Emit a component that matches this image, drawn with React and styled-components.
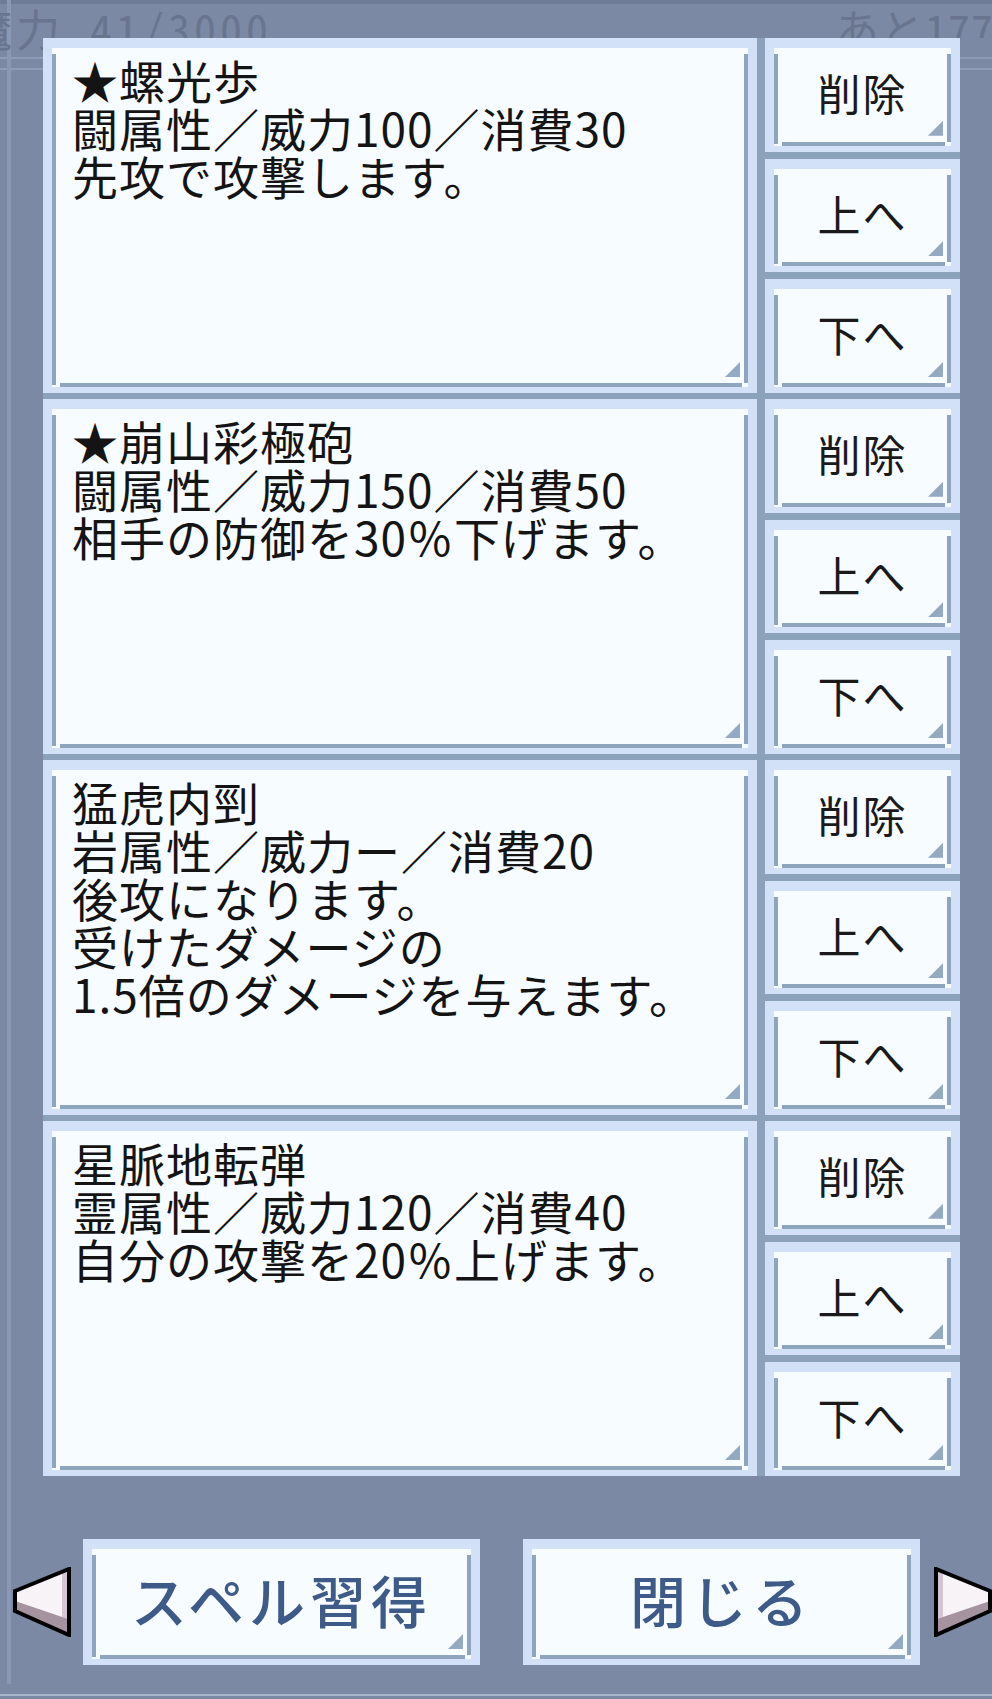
import React from 'react'
import styled, { createGlobalStyle, css } from 'styled-components'

const spells = [
  { id: 1, lines: ['★螺光歩', '闘属性／威力100／消費30', '先攻で攻撃します。'] },
  { id: 2, lines: ['★崩山彩極砲', '闘属性／威力150／消費50', '相手の防御を30％下げます。'] },
  {
    id: 3,
    lines: ['猛虎内剄', '岩属性／威力ー／消費20', '後攻になります。', '受けたダメージの', '1.5倍のダメージを与えます。'],
  },
  { id: 4, lines: ['星脈地転弾', '霊属性／威力120／消費40', '自分の攻撃を20％上げます。'] },
]

const actions = ['削除', '上へ', '下へ']

const GlobalStyle = createGlobalStyle`
  html, body {
    margin: 0;
    padding: 0;
    background: #7c89a5;
  }
  body {
    font-family: "Noto Sans CJK JP", "Noto Sans", sans-serif;
  }
`

// light window band + grey inner edge on left, right and bottom
const frame = css`
  position: relative;
  box-sizing: border-box;
  border-style: solid;
  border-color: #d2e1f8;
  border-width: 10px 9px 6px 9px;
  background:
    linear-gradient(#8fa4bd, #8fa4bd) left 0 top 6px / 4px calc(100% - 8px) no-repeat,
    linear-gradient(#8fa4bd, #8fa4bd) right 0 top 6px / 4px calc(100% - 10px) no-repeat,
    linear-gradient(#8fa4bd, #8fa4bd) left 8px bottom 0 / calc(100% - 14px) 4px no-repeat,
    #f6fcff;

  &::after {
    content: '';
    position: absolute;
    right: 8px;
    bottom: 10px;
    width: 15px;
    height: 15px;
    background: #94a9c2;
    clip-path: polygon(100% 0, 100% 100%, 0 100%);
  }
`

const Screen = styled.div`
  width: 992px;
  height: 1699px;
  overflow: hidden;
  background:
    linear-gradient(#8a98b3, #8a98b3) 7px 0 / 4px 1684px no-repeat,
    linear-gradient(#8d9cb7, #8d9cb7) 0 57px / 100% 2px no-repeat,
    linear-gradient(#8d9cb7, #8d9cb7) 0 68px / 100% 2px no-repeat,
    linear-gradient(#6f7c98, #6f7c98) 0 0 / 100% 4px no-repeat,
    linear-gradient(#a9b5cb, #a9b5cb) 0 1694px / 100% 2px no-repeat,
    #7c89a5;
`

const Header = styled.div`
  box-sizing: border-box;
  height: 38px;
  padding-top: 6px;
  display: flex;
  justify-content: space-between;
  font-size: 44px;
  line-height: 44px;
  letter-spacing: 4px;
  color: #69758f;
  white-space: nowrap;
  font-feature-settings: "hwid" 1;
`

const Power = styled.span`
  margin-left: -32px;
`

const Remain = styled.span`
  width: 157px;
  overflow: hidden;
  letter-spacing: 1px;
`

const List = styled.div`
  position: relative;
  margin-left: 43px;
  width: 917px;
  display: flex;
  flex-direction: column;
  gap: 6px;
  background: #8ca1ba;
`

const Row = styled.div`
  display: grid;
  grid-template-columns: 714px 195px;
  column-gap: 8px;
  height: 355px;
`

const Card = styled.div`
  ${frame}
  padding: 7px 16px 0 20px;
  font-size: 46px;
  line-height: 48px;
  letter-spacing: 1px;
  color: #141414;
  white-space: nowrap;
`

const SideColumn = styled.div`
  display: flex;
  flex-direction: column;
  gap: 7px;
`

const SideButton = styled.button`
  ${frame}
  flex: 1;
  margin: 0;
  padding: 0 0 10px;
  display: flex;
  align-items: center;
  justify-content: center;
  font-family: "Noto Sans CJK JP", sans-serif;
  font-size: 43px;
  font-weight: 400;
  letter-spacing: 2px;
  color: #1a1a1a;
  cursor: pointer;
`

const Footer = styled.div`
  margin-top: 63px;
  padding-left: 13px;
  display: flex;
  align-items: center;
`

const BigButton = styled.button`
  ${frame}
  width: 397px;
  height: 126px;
  margin: ${(p) => (p.$left ? '0 43px 0 12px' : '0 14px 0 0')};
  padding: 0 0 12px;
  display: flex;
  align-items: center;
  justify-content: center;
  font-family: "Noto Sans CJK JP", sans-serif;
  font-size: 56px;
  font-weight: 500;
  letter-spacing: 5px;
  color: #3e5a88;
  cursor: pointer;
`

const ArrowSvg = styled.svg`
  display: block;
  flex: none;
  transform: ${(p) => (p.$flip ? 'scaleX(-1)' : 'none')};
`

function Arrow({ flip }) {
  return (
    <ArrowSvg $flip={flip} width="58" height="70" viewBox="0 0 58 70">
      <polygon points="56,2 56,68 2,44 2,24" fill="#f7f3f7" />
      <polygon points="49,5 55,3 55,52 49,50" fill="#d4c6d2" />
      <polygon points="2,34 55,52 55,68 2,44" fill="#a5939f" />
      <polygon
        points="56,2 56,68 2,44 2,24"
        fill="none"
        stroke="#000"
        strokeWidth="4"
        strokeLinejoin="miter"
      />
    </ArrowSvg>
  )
}

function SpellRow({ spell }) {
  return (
    <Row>
      <Card>
        {spell.lines.map((line, i) => (
          <div key={i}>{line}</div>
        ))}
      </Card>
      <SideColumn>
        {actions.map((a) => (
          <SideButton key={a}>{a}</SideButton>
        ))}
      </SideColumn>
    </Row>
  )
}

export default function App() {
  return (
    <>
      <GlobalStyle />
      <Screen>
        <Header>
          <Power>魔力 41/3000</Power>
          <Remain>あと1774</Remain>
        </Header>
        <List>
          {spells.map((s) => (
            <SpellRow key={s.id} spell={s} />
          ))}
        </List>
        <Footer>
          <Arrow />
          <BigButton $left>スペル習得</BigButton>
          <BigButton>閉じる</BigButton>
          <Arrow flip />
        </Footer>
      </Screen>
    </>
  )
}
